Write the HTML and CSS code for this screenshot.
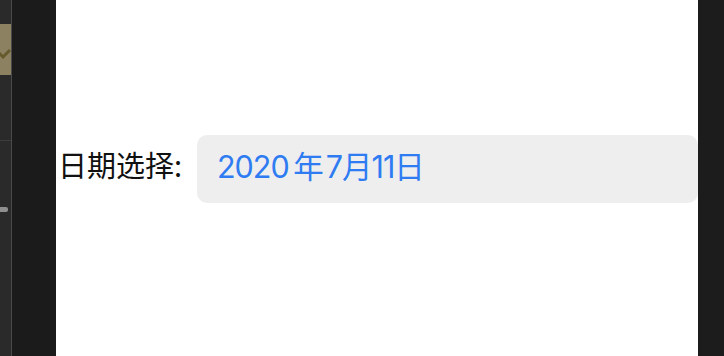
FILE: index.html
```html
<!DOCTYPE html>
<html lang="zh">
<head>
<meta charset="utf-8">
<link rel="stylesheet" href="styles.css">
</head>
<body>
<div class="sidebar">
  <div class="tab-active">
    <svg class="chev" viewBox="0 0 16 10" width="16" height="10"><path d="M1 1 L8 8 L15 1" fill="none" stroke="#665a2c" stroke-width="3"/></svg>
  </div>
  <div class="divider"></div>
  <div class="handle"></div>
</div>
<div class="gutter"></div>
<main class="screen">
  <div class="row">
    <span class="label">日期选择:</span>
    <div class="picker"><span class="date">2020 年<span class="gap">7</span>月11日</span></div>
  </div>
</main>
<div class="edge"></div>
</body>
</html>
```
FILE: styles.css
```css
html, body {
  margin: 0;
  height: 356px;
  overflow: hidden;
}
body {
  display: flex;
  background: #1c1c1c;
  font-family: "Noto Sans CJK SC", "Noto Sans", sans-serif;
}
.sidebar {
  width: 11px;
  flex: none;
  background: #2a2a2a;
  border-right: 1px solid #4a4a4a;
  display: flex;
  flex-direction: column;
}
.tab-active {
  margin-top: 24px;
  height: 51px;
  background: #8c8160;
  position: relative;
  overflow: hidden;
}
.chev {
  position: absolute;
  left: -5px;
  top: 25px;
}
.divider {
  margin-top: 65px;
  height: 1px;
  background: #3c3c3c;
}
.handle {
  margin-top: 66px;
  width: 8px;
  height: 5px;
  background: #8f8f8f;
  border-radius: 0 2px 2px 0;
}
.gutter {
  width: 44px;
  flex: none;
  background: #1b1b1b;
}
.screen {
  width: 642px;
  flex: none;
  background: #ffffff;
  padding-top: 135px;
  box-sizing: border-box;
}
.edge {
  flex: 1;
  background: #1c1c1c;
}
.row {
  display: flex;
  align-items: center;
  padding-left: 2px;
}
.label {
  width: 139px;
  flex: none;
  font-size: 29px;
  color: #111;
  line-height: 1;
  margin-top: -9px;
}
.picker {
  flex: 1;
  height: 68px;
  background: #eeeeef;
  border-radius: 10px;
  display: flex;
  align-items: center;
  padding-left: 20px;
}
.date {
  font-family: Inter, "Noto Sans CJK SC", sans-serif;
  font-size: 30.5px;
  color: #2f7cf2;
  line-height: 1;
  margin-top: -3px;
  word-spacing: -3px;
  letter-spacing: -1px;
}
.gap {
  margin-left: 3px;
}
```
